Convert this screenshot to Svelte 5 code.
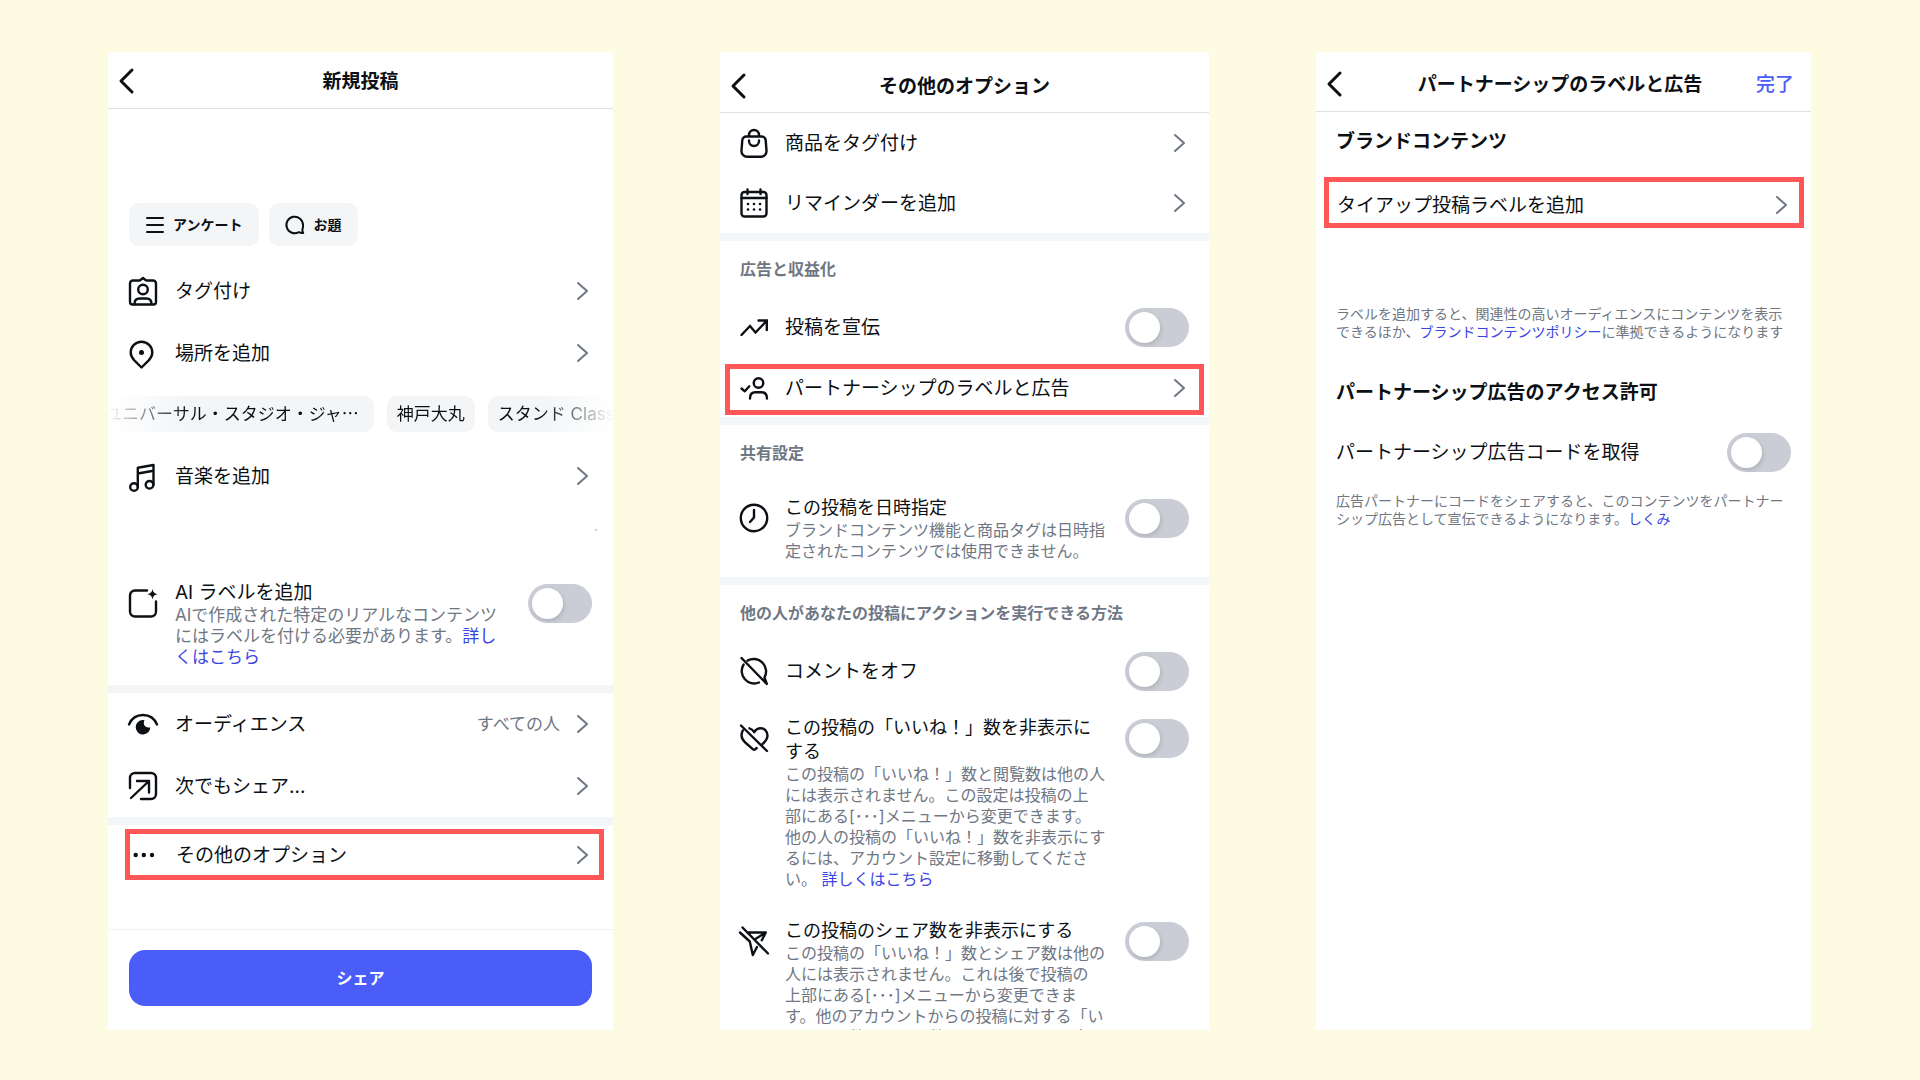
<script>
	const icons = {
		tag: '<path d="M4 3.5h6.3c.5 0 .9-.2 1.2-.5L14 1l2.500 2c.3.3.7.5 1.200.5H24a3 3 0 0 1 3 3V25a2.500 2.500 0 0 1-2.500 2.500h-21A2.500 2.500 0 0 1 1 25V6.500a3 3 0 0 1 3-3z"/><circle cx="14" cy="12.500" r="4.800"/><path d="M5.500 27c0-3.800 2.300-5.500 5-5.500h7c2.700 0 5 1.700 5 5.500"/>',
		pin: '<path d="M12.500 28.500 5.300 21.400C3 19 1.700 16.600 1.700 13.600a10.800 10.800 0 0 1 21.600 0c0 3-1.300 5.400-3.600 7.800z"/><circle class="solid" cx="12.500" cy="13.500" r="2.500"/>',
		music: '<circle cx="5" cy="25" r="3.800"/><circle cx="20.500" cy="22.800" r="3.800"/><path d="M8.800 25V5.800L24.500 3v19.800M8.800 11.500l15.700-2.800"/>',
		ai: '<path d="M18 1.500H6a5 5 0 0 0-5 5V22.500a5 5 0 0 0 5 5h16a5 5 0 0 0 5-5V12.500"/><path class="solid" d="M23.500 0c.8 3.500 1.700 4.300 5 5.200-3.300.9-4.200 1.700-5 5.200-.8-3.500-1.700-4.300-5-5.200 3.300-.9 4.200-1.700 5-5.200z"/>',
		eye: '<path d="M0 14.500C2.500 8.500 7.500 5 14 5s11.500 3.500 14 9.500"/><path class="solid" d="M13.200 10a7.300 7.300 0 1 0 8.100 7.300c-.8.3-1.700.4-2.500.2-2-.3-3.600-1.800-3.900-3.800-.2-1.300.100-2.500.7-3.500a7 7 0 0 0-2.400-.2z"/>',
		share: '<path d="M1 16V6a5 5 0 0 1 5-5h16a5 5 0 0 1 5 5v16a5 5 0 0 1-5 5H12M2 26 20 9M8 9h12v11.500"/>',
		more: '<g class="solid"><circle cx="5.700" cy="14" r="2.200"/><circle cx="13.800" cy="14" r="2.200"/><circle cx="22" cy="14" r="2.200"/></g>',
		bag: '<path d="M6.300 7.500h15.400a4 4 0 0 1 4 3.700l.8 10.500a5.700 5.700 0 0 1-5.700 6.100H7.200a5.700 5.700 0 0 1-5.700-6.100l.8-10.500a4 4 0 0 1 4-3.700zM9 7V6a5 5 0 0 1 10 0v1M9 11.500v.5a5 5 0 0 0 10 0v-.5"/>',
		calendar: '<rect x="1.500" y="3" width="25" height="24.500" rx="3"/><path d="M7.500.5v4.500M20.500.5v4.500M1.500 9h25"/><g class="solid"><circle cx="8" cy="15" r="1.300"/><circle cx="14" cy="15" r="1.300"/><circle cx="20" cy="15" r="1.300"/><circle cx="8" cy="20.500" r="1.300"/><circle cx="14" cy="20.500" r="1.300"/><circle cx="20" cy="20.500" r="1.300"/></g>',
		trend: '<path d="M1.500 22 10 13l5.500 6.500L26.500 8M18.500 7.500h8.300v9.500" stroke-linejoin="miter"/>',
		partner: '<path d="m1.500 14.500 3.300 2.800 4.500-5"/><circle cx="18.500" cy="9" r="4.800"/><path d="M10 24.500c0-4 2-6.200 5.500-6.200h6c3.500 0 5.500 2.200 5.500 6.200"/>',
		clock: '<circle cx="14" cy="14" r="13.200"/><path d="M14 6v7.500L10 18"/>',
		commentOff: '<path d="M1.500 1 26.800 27l-2.300-6.600A12.400 12.400 0 0 0 7.500 3.600M3.600 7.500a12.400 12.400 0 0 0 15.300 18"/>',
		heartOff: '<path d="m1 1.500 26 25.500M9.500 4.300c1.900.4 3.300 1.700 4.700 3.900 1.500-2.600 3.700-4 6.300-4 4 0 7 3.200 7 7.300 0 3.300-1.900 5.800-5 8.500M2.800 6.500c-2.600 5-.8 9.200 3 12.500l7 6.200c1 .9 1.600.9 2.600 0l1.300-1.200"/>',
		planeOff: '<path d="M2.500.5 28 26.500M8.500 5.500h17.300l-4 7.800M25.500 5.800 15 12.200M0 5.500l9.800 9 3 13.500 4.200-8"/>'
	};

	const locations = ['ユニバーサル・スタジオ・ジャ⋯', '神戸大丸', 'スタンド Class'];
</script>

{#snippet icon(name)}
	<svg class="icon" viewBox="0 0 28 28" aria-hidden="true">{@html icons[name]}</svg>
{/snippet}

{#snippet chevron()}
	<svg class="chevron" viewBox="0 0 20 20" aria-hidden="true"><path d="m6 2 9 8-9 8" /></svg>
{/snippet}

{#snippet header(title, done)}
	<header>
		<button class="back" type="button" aria-label="戻る">
			<svg viewBox="0 0 16 26" aria-hidden="true"><path d="M14 2 3 13l11 11" /></svg>
		</button>
		<h1>{title}</h1>
		{#if done}
			<button class="done" type="button">{done}</button>
		{/if}
	</header>
{/snippet}

{#snippet navRow(name, label, value, highlight)}
	<button class="row" class:highlight type="button">
		{#if name}{@render icon(name)}{/if}
		<span class="label">{label}</span>
		{#if value}<span class="value">{value}</span>{/if}
		{@render chevron()}
	</button>
{/snippet}

{#snippet toggleRow(name, id, label)}
	<div class="row">
		{#if name}{@render icon(name)}{/if}
		<label class="label" for={id}>{label}</label>
		<input class="toggle" type="checkbox" role="switch" {id} />
	</div>
{/snippet}

{#snippet detailRow(name, id, label, text, link)}
	<div class="detail">
		{@render icon(name)}
		<div class="body">
			<label for={id}>{label}</label>
			<p>{text}{#if link}<a href="#help">{link}</a>{/if}</p>
		</div>
		<input class="toggle" type="checkbox" role="switch" {id} />
	</div>
{/snippet}

<main>
	<section class="screen post">
		{@render header('新規投稿')}
		<div class="actions">
			<button type="button">
				<svg viewBox="0 0 18 18" aria-hidden="true"><path d="M1 2h16M1 9h16M1 16h16" /></svg>
				アンケート
			</button>
			<button type="button">
				<svg viewBox="0 0 18 18" aria-hidden="true">
					<path d="M17 9A8.300 8.300 0 1 0 12.800 16.200c1.300.7 2.800.9 4.400.8-.7-1-.9-2.200-.8-3.500A8.300 8.300 0 0 0 17 9z" />
				</svg>
				お題
			</button>
		</div>
		{@render navRow('tag', 'タグ付け')}
		{@render navRow('pin', '場所を追加')}
		<div class="locations">
			{#each locations as place}
				<button type="button">{place}</button>
			{/each}
		</div>
		{@render navRow('music', '音楽を追加')}
		<div class="tracks"><span>.</span></div>
		{@render detailRow(
			'ai',
			'ai-label',
			'AI ラベルを追加',
			'AIで作成された特定のリアルなコンテンツ\nにはラベルを付ける必要があります。',
			'詳し\nくはこちら'
		)}
		<hr />
		{@render navRow('eye', 'オーディエンス', 'すべての人')}
		{@render navRow('share', '次でもシェア...')}
		<hr />
		{@render navRow('more', 'その他のオプション', '', true)}
		<footer>
			<button type="button">シェア</button>
		</footer>
	</section>

	<section class="screen options">
		{@render header('その他のオプション')}
		{@render navRow('bag', '商品をタグ付け')}
		{@render navRow('calendar', 'リマインダーを追加')}
		<hr />
		<h2>広告と収益化</h2>
		{@render toggleRow('trend', 'boost', '投稿を宣伝')}
		{@render navRow('partner', 'パートナーシップのラベルと広告', '', true)}
		<hr />
		<h2>共有設定</h2>
		{@render detailRow(
			'clock',
			'schedule',
			'この投稿を日時指定',
			'ブランドコンテンツ機能と商品タグは日時指\n定されたコンテンツでは使用できません。'
		)}
		<hr />
		<h2>他の人があなたの投稿にアクションを実行できる方法</h2>
		{@render toggleRow('commentOff', 'comments-off', 'コメントをオフ')}
		{@render detailRow(
			'heartOff',
			'hide-likes',
			'この投稿の「いいね！」数を非表示に\nする',
			'この投稿の「いいね！」数と閲覧数は他の人\nには表示されません。この設定は投稿の上\n部にある[･･･]メニューから変更できます。\n他の人の投稿の「いいね！」数を非表示にす\nるには、アカウント設定に移動してくださ\nい。 ',
			'詳しくはこちら'
		)}
		{@render detailRow(
			'planeOff',
			'hide-shares',
			'この投稿のシェア数を非表示にする',
			'この投稿の「いいね！」数とシェア数は他の\n人には表示されません。これは後で投稿の\n上部にある[･･･]メニューから変更できま\nす。他のアカウントからの投稿に対する「い\nいね！」数とシェア数は、アカウント設定で'
		)}
	</section>

	<section class="screen partnership">
		{@render header('パートナーシップのラベルと広告', '完了')}
		<h2>ブランドコンテンツ</h2>
		{@render navRow('', 'タイアップ投稿ラベルを追加', '', true)}
		<p class="note">
			ラベルを追加すると、関連性の高いオーディエンスにコンテンツを表示<br />できるほか、<a href="#policy">ブランドコンテンツポリシー</a>に準拠できるようになります
		</p>
		<h2>パートナーシップ広告のアクセス許可</h2>
		{@render toggleRow('', 'ad-code', 'パートナーシップ広告コードを取得')}
		<p class="note">
			広告パートナーにコードをシェアすると、このコンテンツをパートナー<br />シップ広告として宣伝できるようになります。<a href="#how">しくみ</a>
		</p>
	</section>
</main>

<style>
	:global(body) {
		margin: 0;
		background: #fefbe3;
	}
	main {
		--text: #0c1014;
		--muted: #6f7784;
		--fill: #f3f5f7;
		--blue: #4a5df9;
		--link: #3a45e2;
		--red: #ff5757;
		box-sizing: border-box;
		display: grid;
		grid-template-columns: 505fr 489fr 495fr;
		gap: 107px;
		height: 100vh;
		padding: 52px 109px 50px 108px;
		color: var(--text);
		font-family: Inter, 'Noto Sans CJK JP', sans-serif;
		font-size: 19px;
		line-height: 24px;
	}
	button {
		margin: 0;
		padding: 0;
		border: 0;
		background: none;
		color: inherit;
		font: inherit;
		cursor: pointer;
	}
	h1,
	h2,
	p {
		margin: 0;
	}
	a {
		color: var(--link);
		text-decoration: none;
	}
	svg {
		flex: none;
		overflow: visible;
		fill: none;
		stroke: currentColor;
		stroke-width: 2;
		stroke-linecap: round;
		stroke-linejoin: round;
	}
	svg :global(.solid) {
		fill: currentColor;
		stroke: none;
	}
	.screen {
		--pad: 20px;
		display: flex;
		flex-direction: column;
		min-width: 0;
		overflow: hidden;
		background: #fff;
	}
	.screen > * {
		flex: none;
	}
	.post {
		--pad: 21px;
	}

	header {
		box-sizing: border-box;
		display: grid;
		grid-template-columns: 1fr auto 1fr;
		align-items: center;
		height: 60px;
		padding: 4px 17px 0 10px;
		border-bottom: 1px solid #dcdfe3;
	}
	.post header {
		height: 57px;
		padding: 2px 10px 0;
	}
	.options header {
		height: 61px;
		padding: 8px 10px 0;
	}
	h1 {
		padding-top: 2px;
		font-size: 19px;
		font-weight: 600;
	}
	.back {
		display: flex;
		justify-self: start;
	}
	.back svg {
		width: 16px;
		height: 26px;
		stroke-width: 3;
	}
	.done {
		justify-self: end;
		padding-top: 2px;
		color: var(--blue);
		font-weight: 500;
	}
	hr {
		width: 100%;
		height: 8px;
		margin: 0;
		border: 0;
		background: var(--fill);
	}

	.row {
		box-sizing: border-box;
		display: flex;
		align-items: center;
		height: 60px;
		padding: 0 var(--pad);
		text-align: left;
	}
	.post .row {
		height: 62px;
	}
	.icon {
		width: 28px;
		height: 28px;
		margin-right: 17px;
		stroke-width: 2.4;
	}
	.post .icon {
		margin-right: 18px;
	}
	.label {
		flex: 1;
		padding-top: 2px;
	}
	.value {
		margin-right: 12px;
		color: var(--muted);
		font-size: 17px;
	}
	.chevron {
		width: 20px;
		height: 20px;
		color: var(--muted);
	}
	.screen .highlight {
		height: 51px;
		margin: 7px 5px 2px;
		padding: 0 10px 4px;
		border: 5px solid var(--red);
	}
	.post .highlight {
		margin: 4px 9px 0 17px;
		padding: 0 7px 0 0;
	}
	.partnership .highlight {
		margin: 23px 7px 0 8px;
		padding: 4px 8px 0;
	}

	.detail {
		display: flex;
		align-items: flex-start;
		padding: 15px var(--pad);
	}
	.detail + .detail {
		padding-top: 14px;
	}
	.post .detail {
		padding: 36px var(--pad) 17px;
	}
	.detail .icon {
		margin-top: 8px;
	}
	.detail .toggle {
		margin-top: 3px;
	}
	.body {
		flex: 1;
		min-width: 0;
		white-space: pre-line;
	}
	.body label {
		display: block;
		font-size: 18px;
	}
	.body p {
		color: var(--muted);
		font-size: 16px;
		line-height: 21px;
	}
	.post .body label {
		font-size: 19px;
	}
	.post .body p {
		font-size: 17px;
	}

	.toggle {
		flex: none;
		appearance: none;
		box-sizing: border-box;
		width: 64px;
		height: 39px;
		margin: 0;
		padding: 4px;
		border-radius: 20px;
		background: #cacdd5;
		cursor: pointer;
	}
	.toggle::before {
		content: '';
		display: block;
		width: 31px;
		height: 31px;
		border-radius: 50%;
		background: #fff;
		box-shadow: 1px 2px 4px rgba(0, 0, 0, 0.14);
	}
	.toggle:checked {
		background: var(--blue);
	}
	.toggle:checked::before {
		margin-left: auto;
	}

	.actions {
		display: flex;
		gap: 10px;
		padding: 94px var(--pad) 14px;
	}
	.actions button {
		display: flex;
		align-items: center;
		gap: 9px;
		height: 43px;
		padding: 0 17px;
		border-radius: 10px;
		background: var(--fill);
		font-size: 14px;
		font-weight: 600;
	}
	.actions svg {
		width: 18px;
		height: 18px;
	}

	.locations {
		display: flex;
		gap: 13px;
		padding: 12px 0 13px;
		overflow: hidden;
		mask-image: linear-gradient(to right, transparent, #000 80px, #000 calc(100% - 70px), transparent);
	}
	.locations button {
		flex: none;
		height: 36px;
		padding: 0 10px;
		border-radius: 10px;
		background: var(--fill);
		font-size: 17px;
		white-space: nowrap;
	}
	.locations button:first-child {
		margin-left: -13px;
		padding-right: 15px;
	}
	.tracks {
		display: flex;
		justify-content: flex-end;
		height: 38px;
		padding-right: 15px;
		color: #b4b8be;
		font-size: 14px;
		line-height: 38px;
	}

	footer {
		margin-top: auto;
		padding: 20px var(--pad) 24px;
		border-top: 1px solid #eff1f3;
	}
	footer button {
		width: 100%;
		height: 56px;
		border-radius: 16px;
		background: var(--blue);
		color: #fff;
		font-size: 16px;
		font-weight: 600;
	}

	.options h2 {
		padding: 16px var(--pad);
		color: var(--muted);
		font-size: 16px;
		font-weight: 600;
	}
	.partnership h2 {
		padding: 18px var(--pad) 0;
		font-size: 19px;
		font-weight: 600;
	}
	.note {
		padding: 10px var(--pad) 0;
		color: var(--muted);
		font-size: 14px;
		line-height: 18px;
		white-space: nowrap;
	}
	.highlight + .note {
		padding: 77px var(--pad) 22px;
	}
	.note + h2 {
		padding-bottom: 17px;
	}
</style>
